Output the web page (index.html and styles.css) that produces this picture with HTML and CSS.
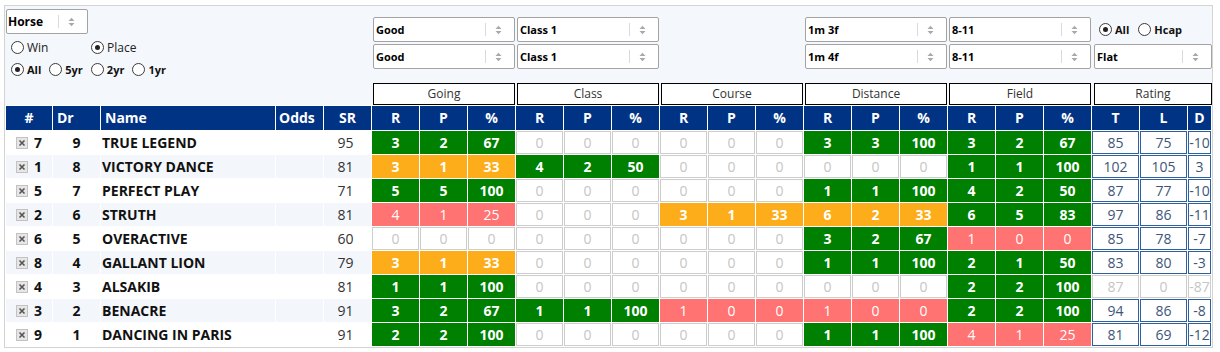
FILE: index.html
```html
<!DOCTYPE html>
<html>
<head>
<meta charset="utf-8">
<title>Form grid</title>
<link rel="stylesheet" href="styles.css">
</head>
<body>
<div class="panel">
  <div class="top">
    <div class="f-left">
      <div class="sel sel-horse"><span class="sel-val">Horse</span><span class="sel-btn"><svg width="7" height="10" viewBox="0 0 7 10"><polygon points="0.5,4 3.5,0.8 6.5,4" fill="#a8a8a8"/><polygon points="0.5,6 3.5,9.2 6.5,6" fill="#a8a8a8"/></svg></span></div>
      <div class="radio-row row-type">
        <span class="rad w80"><span class="dot"></span>Win</span>
        <span class="rad"><span class="dot on"></span>Place</span>
      </div>
      <div class="radio-row row-years">
        <span class="rad"><span class="dot on"></span>All</span>
        <span class="rad"><span class="dot"></span>5yr</span>
        <span class="rad"><span class="dot"></span>2yr</span>
        <span class="rad"><span class="dot"></span>1yr</span>
      </div>
    </div>
    <div class="f-col">
      <div class="sel"><span class="sel-val">Good</span><span class="sel-btn"><svg width="7" height="10" viewBox="0 0 7 10"><polygon points="0.5,4 3.5,0.8 6.5,4" fill="#a8a8a8"/><polygon points="0.5,6 3.5,9.2 6.5,6" fill="#a8a8a8"/></svg></span></div>
      <div class="sel"><span class="sel-val">Good</span><span class="sel-btn"><svg width="7" height="10" viewBox="0 0 7 10"><polygon points="0.5,4 3.5,0.8 6.5,4" fill="#a8a8a8"/><polygon points="0.5,6 3.5,9.2 6.5,6" fill="#a8a8a8"/></svg></span></div>
    </div>
    <div class="f-col">
      <div class="sel"><span class="sel-val">Class 1</span><span class="sel-btn"><svg width="7" height="10" viewBox="0 0 7 10"><polygon points="0.5,4 3.5,0.8 6.5,4" fill="#a8a8a8"/><polygon points="0.5,6 3.5,9.2 6.5,6" fill="#a8a8a8"/></svg></span></div>
      <div class="sel"><span class="sel-val">Class 1</span><span class="sel-btn"><svg width="7" height="10" viewBox="0 0 7 10"><polygon points="0.5,4 3.5,0.8 6.5,4" fill="#a8a8a8"/><polygon points="0.5,6 3.5,9.2 6.5,6" fill="#a8a8a8"/></svg></span></div>
    </div>
    <div class="f-col"></div>
    <div class="f-col">
      <div class="sel"><span class="sel-val">1m 3f</span><span class="sel-btn"><svg width="7" height="10" viewBox="0 0 7 10"><polygon points="0.5,4 3.5,0.8 6.5,4" fill="#a8a8a8"/><polygon points="0.5,6 3.5,9.2 6.5,6" fill="#a8a8a8"/></svg></span></div>
      <div class="sel"><span class="sel-val">1m 4f</span><span class="sel-btn"><svg width="7" height="10" viewBox="0 0 7 10"><polygon points="0.5,4 3.5,0.8 6.5,4" fill="#a8a8a8"/><polygon points="0.5,6 3.5,9.2 6.5,6" fill="#a8a8a8"/></svg></span></div>
    </div>
    <div class="f-col">
      <div class="sel"><span class="sel-val">8-11</span><span class="sel-btn"><svg width="7" height="10" viewBox="0 0 7 10"><polygon points="0.5,4 3.5,0.8 6.5,4" fill="#a8a8a8"/><polygon points="0.5,6 3.5,9.2 6.5,6" fill="#a8a8a8"/></svg></span></div>
      <div class="sel"><span class="sel-val">8-11</span><span class="sel-btn"><svg width="7" height="10" viewBox="0 0 7 10"><polygon points="0.5,4 3.5,0.8 6.5,4" fill="#a8a8a8"/><polygon points="0.5,6 3.5,9.2 6.5,6" fill="#a8a8a8"/></svg></span></div>
    </div>
    <div class="f-rate">
      <div class="radio-row row-race">
        <span class="rad"><span class="dot on"></span>All</span>
        <span class="rad"><span class="dot"></span>Hcap</span>
      </div>
      <div class="sel"><span class="sel-val">Flat</span><span class="sel-btn"><svg width="7" height="10" viewBox="0 0 7 10"><polygon points="0.5,4 3.5,0.8 6.5,4" fill="#a8a8a8"/><polygon points="0.5,6 3.5,9.2 6.5,6" fill="#a8a8a8"/></svg></span></div>
    </div>

    <div class="g-spacer"></div>
    <div class="grp">Going</div>
    <div class="grp">Class</div>
    <div class="grp">Course</div>
    <div class="grp">Distance</div>
    <div class="grp">Field</div>
    <div class="grp grp-rate">Rating</div>
  </div>

  <div class="grid">
    <div class="r hd">
      <div class="c">#</div><div class="c l">Dr</div><div class="c l">Name</div><div class="c l3">Odds</div><div class="c">SR</div>
      <div class="c">R</div><div class="c">P</div><div class="c">%</div>
      <div class="c">R</div><div class="c">P</div><div class="c">%</div>
      <div class="c">R</div><div class="c">P</div><div class="c">%</div>
      <div class="c">R</div><div class="c">P</div><div class="c">%</div>
      <div class="c">R</div><div class="c">P</div><div class="c">%</div>
      <div class="c">T</div><div class="c">L</div><div class="c">D</div>
    </div>

    <div class="r">
      <div class="c num"><svg class="xbox" width="12" height="12" viewBox="0 0 12 12"><rect x="0.5" y="0.5" width="11" height="11" fill="#e6e6e6" stroke="#c2c2c2"/><path d="M3.5 3.5l5 5M8.5 3.5l-5 5" stroke="#555" stroke-width="1.6"/></svg><span>7</span></div>
      <div class="c dr">9</div><div class="c nm">TRUE LEGEND</div><div class="c"></div><div class="c sr">95</div>
      <div class="c g">3</div><div class="c g">2</div><div class="c g">67</div>
      <div class="c z">0</div><div class="c z">0</div><div class="c z">0</div>
      <div class="c z">0</div><div class="c z">0</div><div class="c z">0</div>
      <div class="c g">3</div><div class="c g">3</div><div class="c g">100</div>
      <div class="c g">3</div><div class="c g">2</div><div class="c g">67</div>
      <div class="c t">85</div><div class="c t">75</div><div class="c t">-10</div>
    </div>

    <div class="r alt">
      <div class="c num"><svg class="xbox" width="12" height="12" viewBox="0 0 12 12"><rect x="0.5" y="0.5" width="11" height="11" fill="#e6e6e6" stroke="#c2c2c2"/><path d="M3.5 3.5l5 5M8.5 3.5l-5 5" stroke="#555" stroke-width="1.6"/></svg><span>1</span></div>
      <div class="c dr">8</div><div class="c nm">VICTORY DANCE</div><div class="c"></div><div class="c sr">81</div>
      <div class="c o">3</div><div class="c o">1</div><div class="c o">33</div>
      <div class="c g">4</div><div class="c g">2</div><div class="c g">50</div>
      <div class="c z">0</div><div class="c z">0</div><div class="c z">0</div>
      <div class="c z">0</div><div class="c z">0</div><div class="c z">0</div>
      <div class="c g">1</div><div class="c g">1</div><div class="c g">100</div>
      <div class="c t">102</div><div class="c t">105</div><div class="c t">3</div>
    </div>

    <div class="r">
      <div class="c num"><svg class="xbox" width="12" height="12" viewBox="0 0 12 12"><rect x="0.5" y="0.5" width="11" height="11" fill="#e6e6e6" stroke="#c2c2c2"/><path d="M3.5 3.5l5 5M8.5 3.5l-5 5" stroke="#555" stroke-width="1.6"/></svg><span>5</span></div>
      <div class="c dr">7</div><div class="c nm">PERFECT PLAY</div><div class="c"></div><div class="c sr">71</div>
      <div class="c g">5</div><div class="c g">5</div><div class="c g">100</div>
      <div class="c z">0</div><div class="c z">0</div><div class="c z">0</div>
      <div class="c z">0</div><div class="c z">0</div><div class="c z">0</div>
      <div class="c g">1</div><div class="c g">1</div><div class="c g">100</div>
      <div class="c g">4</div><div class="c g">2</div><div class="c g">50</div>
      <div class="c t">87</div><div class="c t">77</div><div class="c t">-10</div>
    </div>

    <div class="r alt">
      <div class="c num"><svg class="xbox" width="12" height="12" viewBox="0 0 12 12"><rect x="0.5" y="0.5" width="11" height="11" fill="#e6e6e6" stroke="#c2c2c2"/><path d="M3.5 3.5l5 5M8.5 3.5l-5 5" stroke="#555" stroke-width="1.6"/></svg><span>2</span></div>
      <div class="c dr">6</div><div class="c nm">STRUTH</div><div class="c"></div><div class="c sr">81</div>
      <div class="c rd">4</div><div class="c rd">1</div><div class="c rd">25</div>
      <div class="c z">0</div><div class="c z">0</div><div class="c z">0</div>
      <div class="c o">3</div><div class="c o">1</div><div class="c o">33</div>
      <div class="c o">6</div><div class="c o">2</div><div class="c o">33</div>
      <div class="c g">6</div><div class="c g">5</div><div class="c g">83</div>
      <div class="c t">97</div><div class="c t">86</div><div class="c t">-11</div>
    </div>

    <div class="r">
      <div class="c num"><svg class="xbox" width="12" height="12" viewBox="0 0 12 12"><rect x="0.5" y="0.5" width="11" height="11" fill="#e6e6e6" stroke="#c2c2c2"/><path d="M3.5 3.5l5 5M8.5 3.5l-5 5" stroke="#555" stroke-width="1.6"/></svg><span>6</span></div>
      <div class="c dr">5</div><div class="c nm">OVERACTIVE</div><div class="c"></div><div class="c sr">60</div>
      <div class="c z">0</div><div class="c z">0</div><div class="c z">0</div>
      <div class="c z">0</div><div class="c z">0</div><div class="c z">0</div>
      <div class="c z">0</div><div class="c z">0</div><div class="c z">0</div>
      <div class="c g">3</div><div class="c g">2</div><div class="c g">67</div>
      <div class="c rd">1</div><div class="c rd">0</div><div class="c rd">0</div>
      <div class="c t">85</div><div class="c t">78</div><div class="c t">-7</div>
    </div>

    <div class="r alt">
      <div class="c num"><svg class="xbox" width="12" height="12" viewBox="0 0 12 12"><rect x="0.5" y="0.5" width="11" height="11" fill="#e6e6e6" stroke="#c2c2c2"/><path d="M3.5 3.5l5 5M8.5 3.5l-5 5" stroke="#555" stroke-width="1.6"/></svg><span>8</span></div>
      <div class="c dr">4</div><div class="c nm">GALLANT LION</div><div class="c"></div><div class="c sr">79</div>
      <div class="c o">3</div><div class="c o">1</div><div class="c o">33</div>
      <div class="c z">0</div><div class="c z">0</div><div class="c z">0</div>
      <div class="c z">0</div><div class="c z">0</div><div class="c z">0</div>
      <div class="c g">1</div><div class="c g">1</div><div class="c g">100</div>
      <div class="c g">2</div><div class="c g">1</div><div class="c g">50</div>
      <div class="c t">83</div><div class="c t">80</div><div class="c t">-3</div>
    </div>

    <div class="r">
      <div class="c num"><svg class="xbox" width="12" height="12" viewBox="0 0 12 12"><rect x="0.5" y="0.5" width="11" height="11" fill="#e6e6e6" stroke="#c2c2c2"/><path d="M3.5 3.5l5 5M8.5 3.5l-5 5" stroke="#555" stroke-width="1.6"/></svg><span>4</span></div>
      <div class="c dr">3</div><div class="c nm">ALSAKIB</div><div class="c"></div><div class="c sr">81</div>
      <div class="c g">1</div><div class="c g">1</div><div class="c g">100</div>
      <div class="c z">0</div><div class="c z">0</div><div class="c z">0</div>
      <div class="c z">0</div><div class="c z">0</div><div class="c z">0</div>
      <div class="c z">0</div><div class="c z">0</div><div class="c z">0</div>
      <div class="c g">2</div><div class="c g">2</div><div class="c g">100</div>
      <div class="c t off">87</div><div class="c t off">0</div><div class="c t off">-87</div>
    </div>

    <div class="r alt">
      <div class="c num"><svg class="xbox" width="12" height="12" viewBox="0 0 12 12"><rect x="0.5" y="0.5" width="11" height="11" fill="#e6e6e6" stroke="#c2c2c2"/><path d="M3.5 3.5l5 5M8.5 3.5l-5 5" stroke="#555" stroke-width="1.6"/></svg><span>3</span></div>
      <div class="c dr">2</div><div class="c nm">BENACRE</div><div class="c"></div><div class="c sr">91</div>
      <div class="c g">3</div><div class="c g">2</div><div class="c g">67</div>
      <div class="c g">1</div><div class="c g">1</div><div class="c g">100</div>
      <div class="c rd">1</div><div class="c rd">0</div><div class="c rd">0</div>
      <div class="c rd">1</div><div class="c rd">0</div><div class="c rd">0</div>
      <div class="c g">2</div><div class="c g">2</div><div class="c g">100</div>
      <div class="c t">94</div><div class="c t">86</div><div class="c t">-8</div>
    </div>

    <div class="r">
      <div class="c num"><svg class="xbox" width="12" height="12" viewBox="0 0 12 12"><rect x="0.5" y="0.5" width="11" height="11" fill="#e6e6e6" stroke="#c2c2c2"/><path d="M3.5 3.5l5 5M8.5 3.5l-5 5" stroke="#555" stroke-width="1.6"/></svg><span>9</span></div>
      <div class="c dr">1</div><div class="c nm">DANCING IN PARIS</div><div class="c"></div><div class="c sr">91</div>
      <div class="c g">2</div><div class="c g">2</div><div class="c g">100</div>
      <div class="c z">0</div><div class="c z">0</div><div class="c z">0</div>
      <div class="c z">0</div><div class="c z">0</div><div class="c z">0</div>
      <div class="c g">1</div><div class="c g">1</div><div class="c g">100</div>
      <div class="c rd">4</div><div class="c rd">1</div><div class="c rd">25</div>
      <div class="c t">81</div><div class="c t">69</div><div class="c t">-12</div>
    </div>
  </div>
</div>
</body>
</html>
```

FILE: styles.css
```css
* { box-sizing: border-box; }

body {
  margin: 0;
  background: #fff;
  font-family: "Open Sans", "Liberation Sans", sans-serif;
  color: #222;
}

.panel {
  margin: 5px 0 0 4px;
  width: 1209px;
  border: 1px solid #d3d3d3;
  background: #f4f7fb;
}

/* ---------- filter area ---------- */
.top {
  display: grid;
  grid-template-columns: 367px repeat(5, 144px) 120px;
  grid-template-rows: 77px 22px;
}

.f-left { padding: 3px 0 0 1px; }

.f-col {
  padding: 11px 0 0 1px;
  display: flex;
  flex-direction: column;
  gap: 2px;
}
.f-col .sel { width: 142px; }

.f-rate {
  padding: 11px 0 0 2px;
  display: flex;
  flex-direction: column;
  gap: 2px;
}

.sel {
  height: 25px;
  display: flex;
  align-items: center;
  background: #fff;
  border: 1px solid #a3a3a3;
  border-radius: 2px;
  font-size: 11px;
  font-weight: 700;
  color: #000;
}
.sel-horse { width: 82px; font-size: 12px; }
.sel-horse .sel-val { padding-left: 1px; }
.sel-val { flex: 1; padding-left: 2px; white-space: nowrap; }
.sel-btn {
  width: 29px;
  height: 13px;
  border-left: 1px solid #dadada;
  display: flex;
  align-items: center;
  justify-content: center;
  padding-right: 3px;
}
.sel-btn svg { display: block; }

.radio-row {
  display: flex;
  align-items: center;
}
.row-type {
  height: 22px;
  margin-top: 2px;
  padding-left: 5px;
  font-size: 12px;
  color: #222;
}
.row-years {
  height: 22px;
  padding-left: 5px;
  gap: 8px;
  font-size: 11px;
  font-weight: 700;
  color: #111;
}
.row-race {
  height: 25px;
  padding-left: 5px;
  gap: 9px;
  font-size: 11px;
  font-weight: 700;
  color: #111;
}

.rad { display: flex; align-items: center; gap: 3px; }
.w80 { width: 80px; }

.dot {
  width: 13px;
  height: 13px;
  border: 1px solid #3a3a3a;
  border-radius: 50%;
  background: #fff;
  display: flex;
  align-items: center;
  justify-content: center;
}
.dot.on::after {
  content: "";
  width: 5px;
  height: 5px;
  border-radius: 50%;
  background: #222;
}

.grp {
  margin-left: 1px;
  width: 142px;
  height: 22px;
  border: 1px solid #000;
  background: #fff;
  font-size: 12px;
  line-height: 20px;
  text-align: center;
  color: #333;
}
.grp-rate { margin-left: 2px; width: 118px; }

/* ---------- table grid ---------- */
.grid {
  display: grid;
  grid-template-columns: 46px 47px 174px 47px 47px repeat(17, 47px) 23px;
  gap: 1px;
  padding: 1px;
  background: #fff;
}

.r { display: contents; }

.c {
  height: 23px;
  border: 1px solid transparent;
  line-height: 21px;
  font-size: 14px;
  text-align: center;
  white-space: nowrap;
  background: #fff;
  color: #333;
}

.hd .c {
  height: 24px;
  line-height: 22px;
  background: #003384;
  color: #fff;
  font-weight: 700;
}
.hd .l { text-align: left; padding-left: 3px; }
.hd .l3 { text-align: left; padding-left: 2px; }

.alt .c { background: #f3f6fb; }

.num {
  display: flex;
  align-items: center;
  justify-content: center;
  gap: 6px;
  font-weight: 700;
  color: #111;
}
.xbox { display: block; }

.dr { font-weight: 700; color: #111; }
.nm { text-align: left; font-weight: 700; color: #111; }
.sr { padding-right: 4px; }

.r .z { background: #fff; border-color: #cdcdcd; color: #c5c5c5; }
.r .g { background: #008000; border-color: #008000; color: #fff; font-weight: 700; }
.r .o { background: #fdac1a; border-color: #fdac1a; color: #fff; font-weight: 700; }
.r .rd { background: #ff7373; border-color: #ff7373; color: #fff; }
.r .t { background: #fff; border-color: #2f609e; color: #3d5678; }
.r .t.off { border-color: #cdcdcd; color: #c5c5c5; }
```
